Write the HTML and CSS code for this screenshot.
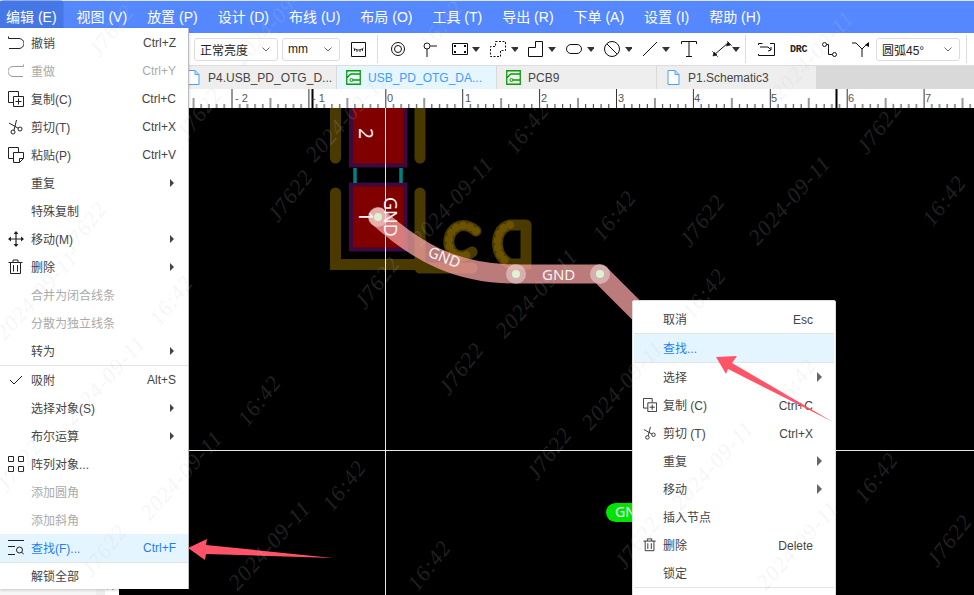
FILE: index.html
```html
<!DOCTYPE html>
<html lang="zh-CN">
<head>
    <meta charset="UTF-8">
    <meta name="viewport" content="width=device-width, initial-scale=1.0">
    <title>PCB Editor</title>
    <link rel="stylesheet" href="styles.css">
</head>
<body>

    <!-- shared icons -->
    <svg class="defs" width="0" height="0">
        <symbol id="ic-copy" viewBox="0 0 16 16"><path d="M5 11.500H.5V.5h10V5M5.500 5.500h10v10h-10zM10.500 7.500v6M7.500 10.500h6" fill="none" stroke="#222"/></symbol>
        <symbol id="ic-cut" viewBox="0 0 16 16"><g fill="none" stroke="#222"><circle cx="5" cy="13" r="2"/><circle cx="12" cy="10" r="2"/><path d="M6 11.200 8.500 1M10.200 9.200 1 4"/></g></symbol>
        <symbol id="ic-trash" viewBox="0 0 16 16"><path d="M.5 3.500h14M5 3.500V1h5v2.500M2.500 3.500v11h10v-11M5.500 6v6.500M9.500 6v6.500" fill="none" stroke="#222"/></symbol>
        <symbol id="ic-doc" viewBox="0 0 12 15"><path d="M.5.500h7l4 4v10H.5zM7.500.500v4h4" fill="#fff" stroke="#4a9eff"/></symbol>
        <symbol id="ic-pcb" viewBox="0 0 15 15"><path d="M.75.750h13.500v13.500H.75zM.75 8l4-4h9.500M7 10h7" fill="none" stroke="#0a9a0a" stroke-width="1.300"/><circle cx="5.500" cy="10" r="1.500" fill="none" stroke="#0a9a0a"/></symbol>
        <symbol id="ic-caret" viewBox="0 0 8 5"><path d="M0 0h8L4 5z" fill="#333"/></symbol>
        <symbol id="ic-chev" viewBox="0 0 8 5"><path d="M.5.500 4 4 7.500.500" fill="none" stroke="#666"/></symbol>
    </svg>

    <div class="app">
        <nav class="menubar">
            <span class="menubar-item active">编辑 (E)</span>
            <span class="menubar-item">视图 (V)</span>
            <span class="menubar-item">放置 (P)</span>
            <span class="menubar-item">设计 (D)</span>
            <span class="menubar-item">布线 (U)</span>
            <span class="menubar-item">布局 (O)</span>
            <span class="menubar-item">工具 (T)</span>
            <span class="menubar-item">导出 (R)</span>
            <span class="menubar-item">下单 (A)</span>
            <span class="menubar-item">设置 (I)</span>
            <span class="menubar-item">帮助 (H)</span>
        </nav>

        <div class="toolbar">
            <div class="select select-bright">正常亮度<svg class="chev"><use href="#ic-chev"/></svg></div>
            <div class="select select-unit">mm<svg class="chev"><use href="#ic-chev"/></svg></div>
            <svg class="tool-eye" width="15" height="15" viewBox="0 0 15 15"><path d="M.5.500h14v14H.5z" fill="none" stroke="#111"/><path d="M2.500 6c3 2.500 7 2.500 10 0M3.500 7v2M6 8v2M9 8v2M11.500 7v2" fill="none" stroke="#111" stroke-width=".9"/></svg>
            <span class="tool-divider"></span>

            <div class="tools tools-place">
                <svg width="17" height="16" viewBox="0 0 17 16"><circle cx="7" cy="8" r="6.500" fill="none" stroke="#111"/><circle cx="7" cy="8" r="3.500" fill="none" stroke="#111"/></svg>
                <svg width="14" height="16" viewBox="0 0 14 16"><circle cx="4" cy="5" r="3" fill="none" stroke="#111"/><path d="M7 5h7M4 8v8" fill="none" stroke="#111"/></svg>
                <svg width="28" height="14" viewBox="0 0 28 14"><path d="M.5 1.500h15v11H.5z" fill="none" stroke="#111"/><path d="M2 3h2v2H2zM12 3h2v2h-2zM2 9h2v2H2zM12 9h2v2h-2z" fill="#111"/><use href="#ic-caret" x="20" y="5" width="8" height="5"/></svg>
                <svg width="28" height="16" viewBox="0 0 28 16"><path d="M5.500.500h10v9h-5v6H.5v-10h5z" fill="none" stroke="#111" stroke-dasharray="2 1.500"/><use href="#ic-caret" x="21" y="6" width="8" height="5"/></svg>
                <svg width="28" height="16" viewBox="0 0 28 16"><path d="M.5 15.500v-9h7v-6h7v15z" fill="none" stroke="#111"/><use href="#ic-caret" x="20" y="6" width="8" height="5"/></svg>
                <svg width="28" height="12" viewBox="0 0 28 12"><rect x=".5" y="1.500" width="15" height="9" rx="4.500" fill="none" stroke="#111"/><use href="#ic-caret" x="21" y="4" width="8" height="5"/></svg>
                <svg width="28" height="16" viewBox="0 0 28 16"><circle cx="8" cy="8" r="7.500" fill="none" stroke="#111"/><path d="M3 3l10 10" stroke="#111"/><use href="#ic-caret" x="21" y="6" width="8" height="5"/></svg>
                <svg width="28" height="16" viewBox="0 0 28 16"><path d="M1 15 15 1" stroke="#111"/><use href="#ic-caret" x="20" y="6" width="8" height="5"/></svg>
                <svg class="tool-text" width="16" height="16" viewBox="0 0 16 16"><path d="M.5 3V.500h15V3M8 .500v15M5 15.500h6" fill="none" stroke="#111"/></svg>
                <svg width="28" height="16" viewBox="0 0 28 16"><path d="M2 14 16 2" stroke="#111"/><path d="M16 1l2.500 3-4 1zM1 15l1-4 3 3zM0 10l6 6M14 -1l6 6" fill="#111" stroke="#111" stroke-width=".6"/><use href="#ic-caret" x="20" y="6" width="8" height="5"/></svg>
            </div>
            <span class="tool-divider"></span>

            <div class="tools tools-route">
                <svg width="17" height="13" viewBox="0 0 17 13"><path d="M.5 2V.500h4M12 .500h4.500v12H.5V11M2 4h8l3 3M10 8l3-1V4" fill="none" stroke="#111"/></svg>
                <span class="drc">DRC</span>
                <svg width="15" height="15" viewBox="0 0 15 15"><circle cx="2.500" cy="2.500" r="2" fill="none" stroke="#111"/><circle cx="12.500" cy="12.500" r="2" fill="none" stroke="#111"/><path d="M4.500 2.500H6.500V12.500H10.500" fill="none" stroke="#111"/></svg>
                <svg width="17" height="15" viewBox="0 0 17 15"><path d="M0 1h4l6 6 6-6M10 7v8" fill="none" stroke="#111"/><path d="M17 0v5l-4-2z" fill="#111"/></svg>
            </div>
            <div class="select select-arc">圆弧45°<svg class="chev"><use href="#ic-chev"/></svg></div>
            <span class="tool-divider"></span>
        </div>

        <div class="tabs">
            <div class="tab"><svg class="tab-icon"><use href="#ic-doc"/></svg>P4.USB_PD_OTG_D...</div>
            <div class="tab tab-active"><svg class="tab-icon"><use href="#ic-pcb"/></svg>USB_PD_OTG_DA...</div>
            <div class="tab"><svg class="tab-icon"><use href="#ic-pcb"/></svg>PCB9</div>
            <div class="tab"><svg class="tab-icon"><use href="#ic-doc"/></svg>P1.Schematic3</div>
        </div>

        <div class="workspace">
            <aside class="side-panel"><div class="side-scroll"></div></aside>
            <div class="board-area">
                <svg class="ruler" viewBox="105 89 869 19">
                    <defs>
                        <pattern id="ticks" patternUnits="userSpaceOnUse" x="385.300" y="89" width="76.900" height="19">
                            <path d="M.5 0V19M8.200 15v4M15.900 15v4M23.600 15v4M31.300 15v4M38.950 9v10M46.600 15v4M54.300 15v4M62 15v4M69.700 15v4" stroke="#333" fill="none"/>
                        </pattern>
                    </defs>
                    <rect x="105" y="89" width="869" height="19" fill="url(#ticks)"/>
                    <path d="M312.500 89v19M836.500 89v19" stroke="#000" stroke-width="2"/>
                    <g class="ruler-num">
                        <text x="235" y="102">- 2</text>
                        <text x="312" y="102">- 1</text>
                        <text x="387" y="102">0</text>
                        <text x="465" y="102">1</text>
                        <text x="541" y="102">2</text>
                        <text x="618" y="102">3</text>
                        <text x="694" y="102">4</text>
                        <text x="771" y="102">5</text>
                        <text x="848" y="102">6</text>
                        <text x="925" y="102">7</text>
                    </g>
                </svg>
                <div class="board-row">
                    <div class="vruler"><span class="vruler-num">2</span></div>
                    <svg class="board" viewBox="119 108 855 487">
                        <g fill="none" stroke="#4a3a00" stroke-width="11" stroke-linecap="round">
                            <path d="M335.500 100V158M420 100V158M335.500 193V264.500H420V193M420 268H472"/>
                            <path d="M476 231C470 226 464 225 460 226C450 229 447 240 450 248C453 256 462 259 472 252"/>
                            <path d="M526 225H510C500 227 496 238 498 248C499 255 503 260 510 264H526V225"/>
                        </g>
                        <g fill="none" stroke="#6b5200" stroke-width="8" stroke-linecap="round" stroke-dasharray=".1 7">
                            <path d="M476 231C470 226 464 225 460 226C450 229 447 240 450 248C453 256 462 259 472 252"/>
                            <path d="M510 225C500 227 496 238 498 248C499 255 503 260 510 264"/>
                        </g>
                        <path d="M351 100V165.500H405.500V100zM351 184.500H405.500V249.500H351z" fill="#800000" stroke="#3c0a3c" stroke-width="4"/>
                        <path d="M355 168V183M401 168V183" stroke="#008080" stroke-width="3.500"/>
                        <path d="M385.500 108V595M119 450.500H974" stroke="#fff" stroke-opacity=".9"/>
                        <path d="M378 217C420 255 460 274 516 274H600L665 339" fill="none" stroke="#f4a0a0" stroke-opacity=".77" stroke-width="19" stroke-linecap="round" stroke-linejoin="round"/>
                        <g fill="#fff" fill-opacity=".4">
                            <circle cx="378" cy="217" r="10"/>
                            <circle cx="516" cy="274" r="10"/>
                            <circle cx="600" cy="274" r="10"/>
                        </g>
                        <g fill="#dcf3d4">
                            <circle cx="378" cy="217" r="4"/>
                            <circle cx="516" cy="274" r="4"/>
                            <circle cx="600" cy="274" r="4"/>
                        </g>
                        <g class="board-label">
                            <text transform="translate(359 128) rotate(90)" font-size="19">2</text>
                            <text transform="translate(359 211) rotate(90)" font-size="19">1</text>
                            <text transform="translate(384 197) rotate(90)" font-size="18">GND</text>
                            <text transform="translate(427 256) rotate(22)" font-size="15">GND</text>
                            <text x="542" y="280" font-size="15">GND</text>
                        </g>
                        <rect x="606" y="503" width="60" height="19" rx="9.500" fill="#00e400"/>
                        <text class="board-label" x="615" y="517" font-size="14">GND</text>
                    </svg>
                </div>
            </div>
        </div>
    </div>

    <!-- edit menu, open over the page -->
    <div class="menu edit-menu">
        <div class="menu-item"><span class="menu-icon"><svg width="16" height="16" viewBox="0 0 16 16"><path d="M.5 3.500H11a5 5 0 0 1 0 10H1M.5 3.500v-2" fill="none" stroke="#222"/></svg></span>撤销<span class="shortcut">Ctrl+Z</span></div>
        <div class="menu-item disabled"><span class="menu-icon"><svg width="16" height="16" viewBox="0 0 16 16"><path d="M15.500 3.500H5a5 5 0 0 0 0 10h10M15.500 3.500v-2" fill="none" stroke="#999"/></svg></span>重做<span class="shortcut">Ctrl+Y</span></div>
        <div class="menu-item"><span class="menu-icon"><svg width="16" height="16"><use href="#ic-copy"/></svg></span>复制(C)<span class="shortcut">Ctrl+C</span></div>
        <div class="menu-item"><span class="menu-icon"><svg width="16" height="16"><use href="#ic-cut"/></svg></span>剪切(T)<span class="shortcut">Ctrl+X</span></div>
        <div class="menu-item"><span class="menu-icon"><svg width="16" height="16" viewBox="0 0 16 16"><path d="M5 11.500H.5V.5h10V5M5.500 5.500h10v6l-4 4h-6zM15.500 11.500h-4v4" fill="none" stroke="#222"/></svg></span>粘贴(P)<span class="shortcut">Ctrl+V</span></div>
        <div class="menu-item"><span class="menu-icon"></span>重复<span class="arrow"></span></div>
        <div class="menu-item"><span class="menu-icon"></span>特殊复制</div>
        <div class="menu-item"><span class="menu-icon"><svg width="16" height="16" viewBox="0 0 16 16"><path d="M8 1v14M1 8h14" stroke="#222" stroke-width="1.200"/><path d="M8 0l2.500 3h-5zM8 16l2.500-3h-5zM0 8l3-2.500v5zM16 8l-3-2.500v5z" fill="#222"/></svg></span>移动(M)<span class="arrow"></span></div>
        <div class="menu-item"><span class="menu-icon"><svg width="16" height="16"><use href="#ic-trash"/></svg></span>删除<span class="arrow"></span></div>
        <div class="menu-item disabled"><span class="menu-icon"></span>合并为闭合线条</div>
        <div class="menu-item disabled"><span class="menu-icon"></span>分散为独立线条</div>
        <div class="menu-item"><span class="menu-icon"></span>转为<span class="arrow"></span></div>
        <div class="menu-sep"></div>
        <div class="menu-item"><span class="menu-icon"><svg width="14" height="10" viewBox="0 0 14 10"><path d="M1 5l4 4 8-8" fill="none" stroke="#222"/></svg></span>吸附<span class="shortcut">Alt+S</span></div>
        <div class="menu-item"><span class="menu-icon"></span>选择对象(S)<span class="arrow"></span></div>
        <div class="menu-item"><span class="menu-icon"></span>布尔运算<span class="arrow"></span></div>
        <div class="menu-item"><span class="menu-icon"><svg width="16" height="16" viewBox="0 0 16 16"><path d="M.5.500h5v5h-5zM10.500.500h5v5h-5zM.5 10.500h5v5h-5zM10.500 10.500h5v5h-5z" fill="none" stroke="#222"/></svg></span>阵列对象...</div>
        <div class="menu-item disabled"><span class="menu-icon"></span>添加圆角</div>
        <div class="menu-item disabled"><span class="menu-icon"></span>添加斜角</div>
        <div class="menu-item highlight"><span class="menu-icon"><svg width="16" height="16" viewBox="0 0 16 16"><path d="M0 .500h16M0 6.500h7M0 14.500h7" fill="none" stroke="#222"/><circle cx="11.500" cy="10" r="3" fill="none" stroke="#222"/><path d="M13.500 12l2.500 2.500" stroke="#222"/></svg></span>查找(F)...<span class="shortcut">Ctrl+F</span></div>
        <div class="menu-sep"></div>
        <div class="menu-item menu-item-last"><span class="menu-icon"></span>解锁全部</div>
    </div>

    <!-- right click menu on the canvas -->
    <div class="menu ctx-menu">
        <div class="menu-item"><span class="menu-icon"></span>取消<span class="shortcut">Esc</span></div>
        <div class="menu-sep"></div>
        <div class="menu-item highlight"><span class="menu-icon"></span>查找...</div>
        <div class="menu-sep"></div>
        <div class="menu-item"><span class="menu-icon"></span>选择<span class="arrow"></span></div>
        <div class="menu-item"><span class="menu-icon"><svg width="14" height="14"><use href="#ic-copy"/></svg></span>复制 (C)<span class="shortcut">Ctrl+C</span></div>
        <div class="menu-item"><span class="menu-icon"><svg width="14" height="14"><use href="#ic-cut"/></svg></span>剪切 (T)<span class="shortcut">Ctrl+X</span></div>
        <div class="menu-item"><span class="menu-icon"></span>重复<span class="arrow"></span></div>
        <div class="menu-item"><span class="menu-icon"></span>移动<span class="arrow"></span></div>
        <div class="menu-item"><span class="menu-icon"></span>插入节点</div>
        <div class="menu-item"><span class="menu-icon"><svg width="14" height="14"><use href="#ic-trash"/></svg></span>删除<span class="shortcut">Delete</span></div>
        <div class="menu-item"><span class="menu-icon"></span>锁定</div>
        <div class="menu-sep"></div>
    </div>

    <!-- annotation arrows and the watermark lie over everything -->
    <svg class="overlay" viewBox="0 0 974 595">
        <path d="M188 548 207 539 206 545 333 558 206 554 205 560z" fill="#ff5468"/>
        <path d="M716 357 737 356 732 363 833 422 728 369 726 374z" fill="#ff5468"/>
        <g class="watermark">
            <text transform="translate(117 35) rotate(-52)">J7622</text>
            <text transform="translate(280 25) rotate(-48)">2024-09-11</text>
            <text transform="translate(447 30) rotate(-52)">16:42</text>
            <text transform="translate(818 60) rotate(-48)">2024-09-11</text>
            <text transform="translate(205 118) rotate(-52)">J7622</text>
            <text transform="translate(352 122) rotate(-48)">2024-09-11</text>
            <text transform="translate(533 133) rotate(-52)">16:42</text>
            <text transform="translate(885 132) rotate(-52)">J7622</text>
            <text transform="translate(296 200) rotate(-52)">J7622</text>
            <text transform="translate(90 232) rotate(-52)">J7622</text>
            <text transform="translate(458 206) rotate(-48)">2024-09-11</text>
            <text transform="translate(620 220) rotate(-52)">16:42</text>
            <text transform="translate(708 225) rotate(-52)">J7622</text>
            <text transform="translate(795 205) rotate(-48)">2024-09-11</text>
            <text transform="translate(950 205) rotate(-52)">16:42</text>
            <text transform="translate(42 300) rotate(-48)">2024-09-11</text>
            <text transform="translate(177 305) rotate(-52)">16:42</text>
            <text transform="translate(383 287) rotate(-52)">J7622</text>
            <text transform="translate(542 298) rotate(-48)">2024-09-11</text>
            <text transform="translate(710 298) rotate(-52)">16:42</text>
            <text transform="translate(110 385) rotate(-48)">2024-09-11</text>
            <text transform="translate(467 373) rotate(-52)">J7622</text>
            <text transform="translate(628 390) rotate(-48)">2024-09-11</text>
            <text transform="translate(800 388) rotate(-52)">16:42</text>
            <text transform="translate(265 405) rotate(-52)">16:42</text>
            <text transform="translate(25 470) rotate(-52)">J7622</text>
            <text transform="translate(187 480) rotate(-48)">2024-09-11</text>
            <text transform="translate(350 490) rotate(-52)">16:42</text>
            <text transform="translate(555 458) rotate(-52)">J7622</text>
            <text transform="translate(718 470) rotate(-48)">2024-09-11</text>
            <text transform="translate(882 482) rotate(-52)">16:42</text>
            <text transform="translate(110 555) rotate(-52)">J7622</text>
            <text transform="translate(275 550) rotate(-48)">2024-09-11</text>
            <text transform="translate(435 570) rotate(-52)">16:42</text>
            <text transform="translate(643 547) rotate(-52)">J7622</text>
            <text transform="translate(803 550) rotate(-48)">2024-09-11</text>
            <text transform="translate(955 545) rotate(-52)">J7622</text>
        </g>
    </svg>

</body>
</html>
```

FILE: styles.css
```css
* {
    box-sizing: border-box;
}

body {
    margin: 0;
    height: 595px;
    overflow: hidden;
    position: relative;
    font-family: "Liberation Sans", "Noto Sans CJK SC", sans-serif;
    font-size: 12px;
    color: #444;
    background-color: #fff;
}

.defs {
    position: absolute;
}

.app {
    height: 595px;
    display: flex;
    flex-direction: column;
}

/* top menu bar */
.menubar {
    height: 33px;
    flex: none;
    display: flex;
    align-items: center;
    gap: 20px;
    padding: 0 0 3px 6px;
    border-top: 1px solid #dde6ff;
    background-color: #5588ff;
    color: #fff;
    font-size: 14px;
    white-space: nowrap;
}

.menubar-item.active {
    background-color: #4677e6;
    box-shadow: 0 0 0 7px #4677e6;
    clip-path: inset(-5px -7px -5px -6px round 3px);
}

/* toolbar */
.toolbar {
    height: 32px;
    flex: none;
    display: flex;
    align-items: center;
    padding-left: 194px;
    background-color: #fff;
    color: #222;
}

.select {
    height: 23px;
    display: flex;
    align-items: center;
    justify-content: space-between;
    padding: 0 7px 0 5px;
    border: 1px solid #ddd;
    border-radius: 3px;
    font-size: 12px;
    background-color: #fff;
}

.select-bright {
    width: 84px;
}

.select-unit {
    width: 58px;
    margin-left: 4px;
}

.select-arc {
    width: 84px;
    margin-right: 6px;
}

.chev {
    width: 8px;
    height: 5px;
}

.tool-eye {
    margin-left: 11px;
}

.tool-divider {
    width: 1px;
    height: 28px;
    margin-left: 11px;
    background-color: #ddd;
}

.tools-place + .tool-divider,
.select-arc + .tool-divider {
    margin-left: 0;
}

.tools {
    display: flex;
    align-items: center;
    gap: 15px;
}

.tools-place {
    padding-left: 13px;
    padding-right: 5px;
}

/* the tools with a dropdown caret sit closer together */
.tools-place > svg:nth-child(n+4):nth-child(-n+8) {
    margin-left: -5px;
}

.tools-place .tool-text {
    margin-left: -4px;
}

.tools-route {
    padding-left: 1px;
    margin-left: 11px;
    margin-right: 7px;
}

.drc {
    width: 17px;
    font-family: "Liberation Mono", monospace;
    font-size: 10px;
    font-weight: bold;
    letter-spacing: -.3px;
    white-space: nowrap;
}

/* document tabs */
.tabs {
    height: 24px;
    flex: none;
    display: flex;
    gap: 1px;
    padding-left: 177px;
    border-top: 1px solid #ddd;
    background-color: #d9d9d9;
    color: #444;
}

.tab {
    width: 159px;
    display: flex;
    align-items: center;
    gap: 7px;
    padding-left: 9px;
    background-color: #eee;
    white-space: nowrap;
}

.tab-active {
    background-color: #e6f6ff;
    color: #3f9cff;
}

.tab-icon {
    width: 15px;
    height: 15px;
    flex: none;
}

/* ruler and board */
.workspace {
    flex: 1;
    min-height: 0;
    display: flex;
}

.side-panel {
    width: 105px;
    flex: none;
    display: flex;
    justify-content: flex-end;
    background-color: #f6f6f6;
}

.side-scroll {
    width: 9px;
    background-color: #eee;
}

.board-area {
    flex: 1;
    min-width: 0;
    display: flex;
    flex-direction: column;
}

.ruler {
    width: 869px;
    height: 19px;
    flex: none;
    display: block;
    background-color: #fff;
}

.ruler-num {
    font-size: 11px;
    fill: #555;
}

.board-row {
    flex: 1;
    min-height: 0;
    display: flex;
}

.vruler {
    width: 14px;
    flex: none;
    display: flex;
    flex-direction: column;
    justify-content: flex-end;
    background-color: #fff;
    overflow: hidden;
}

.vruler-num {
    transform: rotate(90deg);
    font-size: 11px;
    line-height: 6px;
    height: 6px;
    margin-left: -2px;
}

.board {
    width: 855px;
    height: 487px;
    display: block;
    background-color: #000;
}

.board-label {
    fill: #f4f4f4;
    font-family: "Noto Sans", sans-serif;
}

/* popup menus */
.menu {
    position: absolute;
    background-color: #fff;
    color: #444;
    font-size: 12px;
}

.edit-menu {
    left: 0;
    top: 28px;
    width: 189px;
    height: 561px;
    padding-top: 1px;
    border-right: 1px solid #bbb;
    box-shadow: 0 1px 3px rgba(0, 0, 0, 0.2);
}

.ctx-menu {
    left: 632px;
    top: 300px;
    width: 204px;
    height: 300px;
    padding: 4px 1px 0;
    border: 1px solid #ddd;
    border-radius: 2px;
}

/* labels sit low in their line box, so the row is padded and the rest pushed back */
.menu-item {
    height: 28px;
    display: flex;
    align-items: center;
    padding-right: 12px;
    padding-bottom: 2px;
    white-space: nowrap;
}

.ctx-menu .menu-item {
    padding-right: 21px;
}

.menu-item-last {
    height: 26px;
}

.menu-icon {
    width: 31px;
    flex: none;
    display: flex;
    justify-content: center;
    margin-top: 2px;
}

.ctx-menu .menu-icon {
    width: 29px;
    justify-content: flex-start;
    padding-left: 9px;
}

.menu-item.disabled {
    color: #aaa;
}

.menu-item.highlight {
    background-color: #e5f5ff;
    color: #1f7fef;
}

.shortcut {
    margin-left: auto;
    margin-top: 2px;
}

.ctx-menu .shortcut {
    margin-top: 4px;
}

.arrow {
    margin-left: auto;
    margin-top: 2px;
    margin-right: 2px;
    border-left: 4px solid #444;
    border-top: 4px solid transparent;
    border-bottom: 4px solid transparent;
}

.ctx-menu .arrow {
    margin-right: -9px;
    border-left-width: 5px;
    border-left-color: #666;
    border-top-width: 5px;
    border-bottom-width: 5px;
}

.menu-sep {
    height: 1px;
    background-color: #e3e3e3;
}

/* top layer */
.overlay {
    position: absolute;
    left: 0;
    top: 0;
    width: 974px;
    height: 595px;
    pointer-events: none;
}

.watermark {
    font-family: "Liberation Serif", serif;
    font-style: italic;
    font-size: 22px;
    letter-spacing: 1px;
    fill: rgba(200, 200, 200, 0.18);
    text-anchor: middle;
}
```
